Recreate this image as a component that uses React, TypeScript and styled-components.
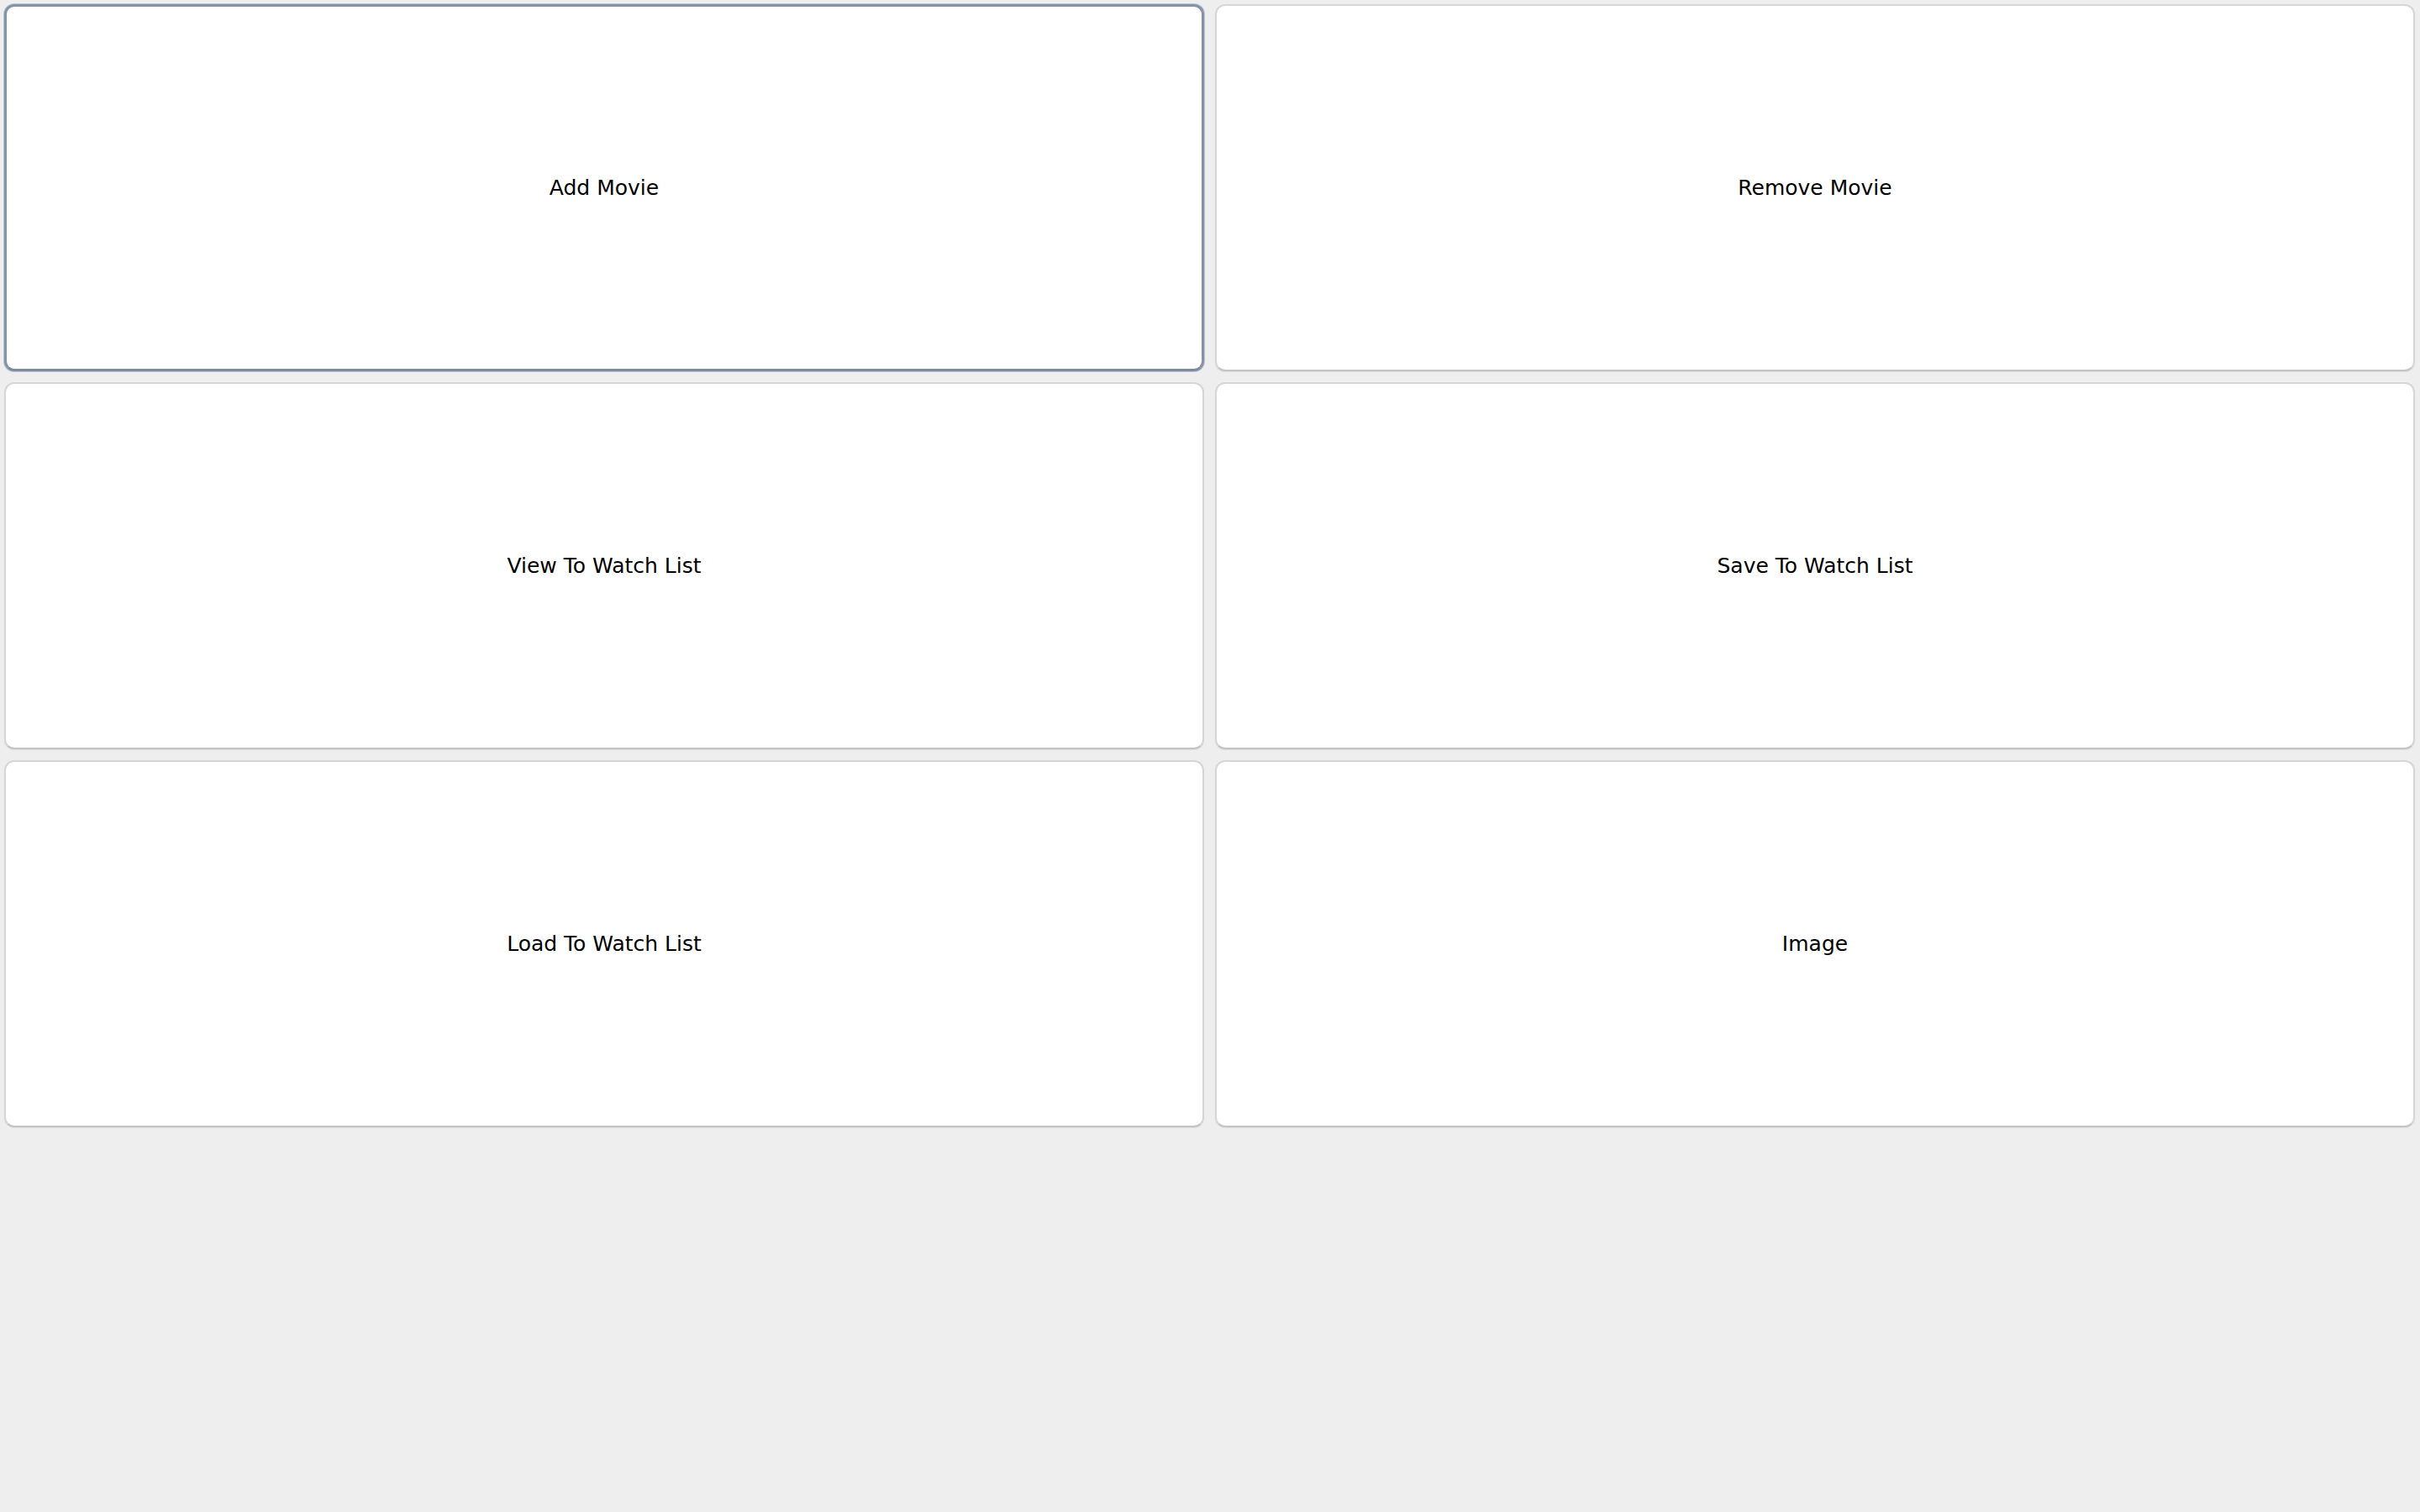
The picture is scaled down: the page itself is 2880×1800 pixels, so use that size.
import styled, { createGlobalStyle } from "styled-components";

const GlobalStyle = createGlobalStyle`
  html, body {
    margin: 0;
    padding: 0;
    background-color: #eeeeee;
  }
  #root {
    min-height: 100vh;
  }
`;

const Window = styled.div`
  box-sizing: border-box;
  width: 100%;
  min-height: 100vh;
  background-color: #eeeeee;
  padding: 5px 6px 0 5px;
`;

const ButtonGrid = styled.div`
  display: grid;
  grid-template-columns: 1fr 1fr;
  grid-auto-rows: 437px;
  gap: 13px;
`;

const ActionButton = styled.button<{ $focused?: boolean }>`
  box-sizing: border-box;
  display: flex;
  align-items: center;
  justify-content: center;
  background-color: #ffffff;
  border-radius: 12px;
  border: ${(p) => (p.$focused ? "3px solid #8592a8" : "2px solid #d6d6d6")};
  border-bottom-color: ${(p) => (p.$focused ? "#7d8aa0" : "#c4c4c4")};
  box-shadow: ${(p) =>
    p.$focused ? "0 0 0 1px #b9c2d0" : "0 1px 1px rgba(0, 0, 0, 0.08)"};
  font-family: "DejaVu Sans", Verdana, sans-serif;
  font-size: 25px;
  color: #000000;
  cursor: pointer;
  padding: 0;
  outline: none;
`;

const actions = [
  "Add Movie",
  "Remove Movie",
  "View To Watch List",
  "Save To Watch List",
  "Load To Watch List",
  "Image",
];

function App() {
  return (
    <>
      <GlobalStyle />
      <Window>
        <ButtonGrid>
          {actions.map((label, i) => (
            <ActionButton key={label} $focused={i === 0}>
              {label}
            </ActionButton>
          ))}
        </ButtonGrid>
      </Window>
    </>
  );
}

export default App;
